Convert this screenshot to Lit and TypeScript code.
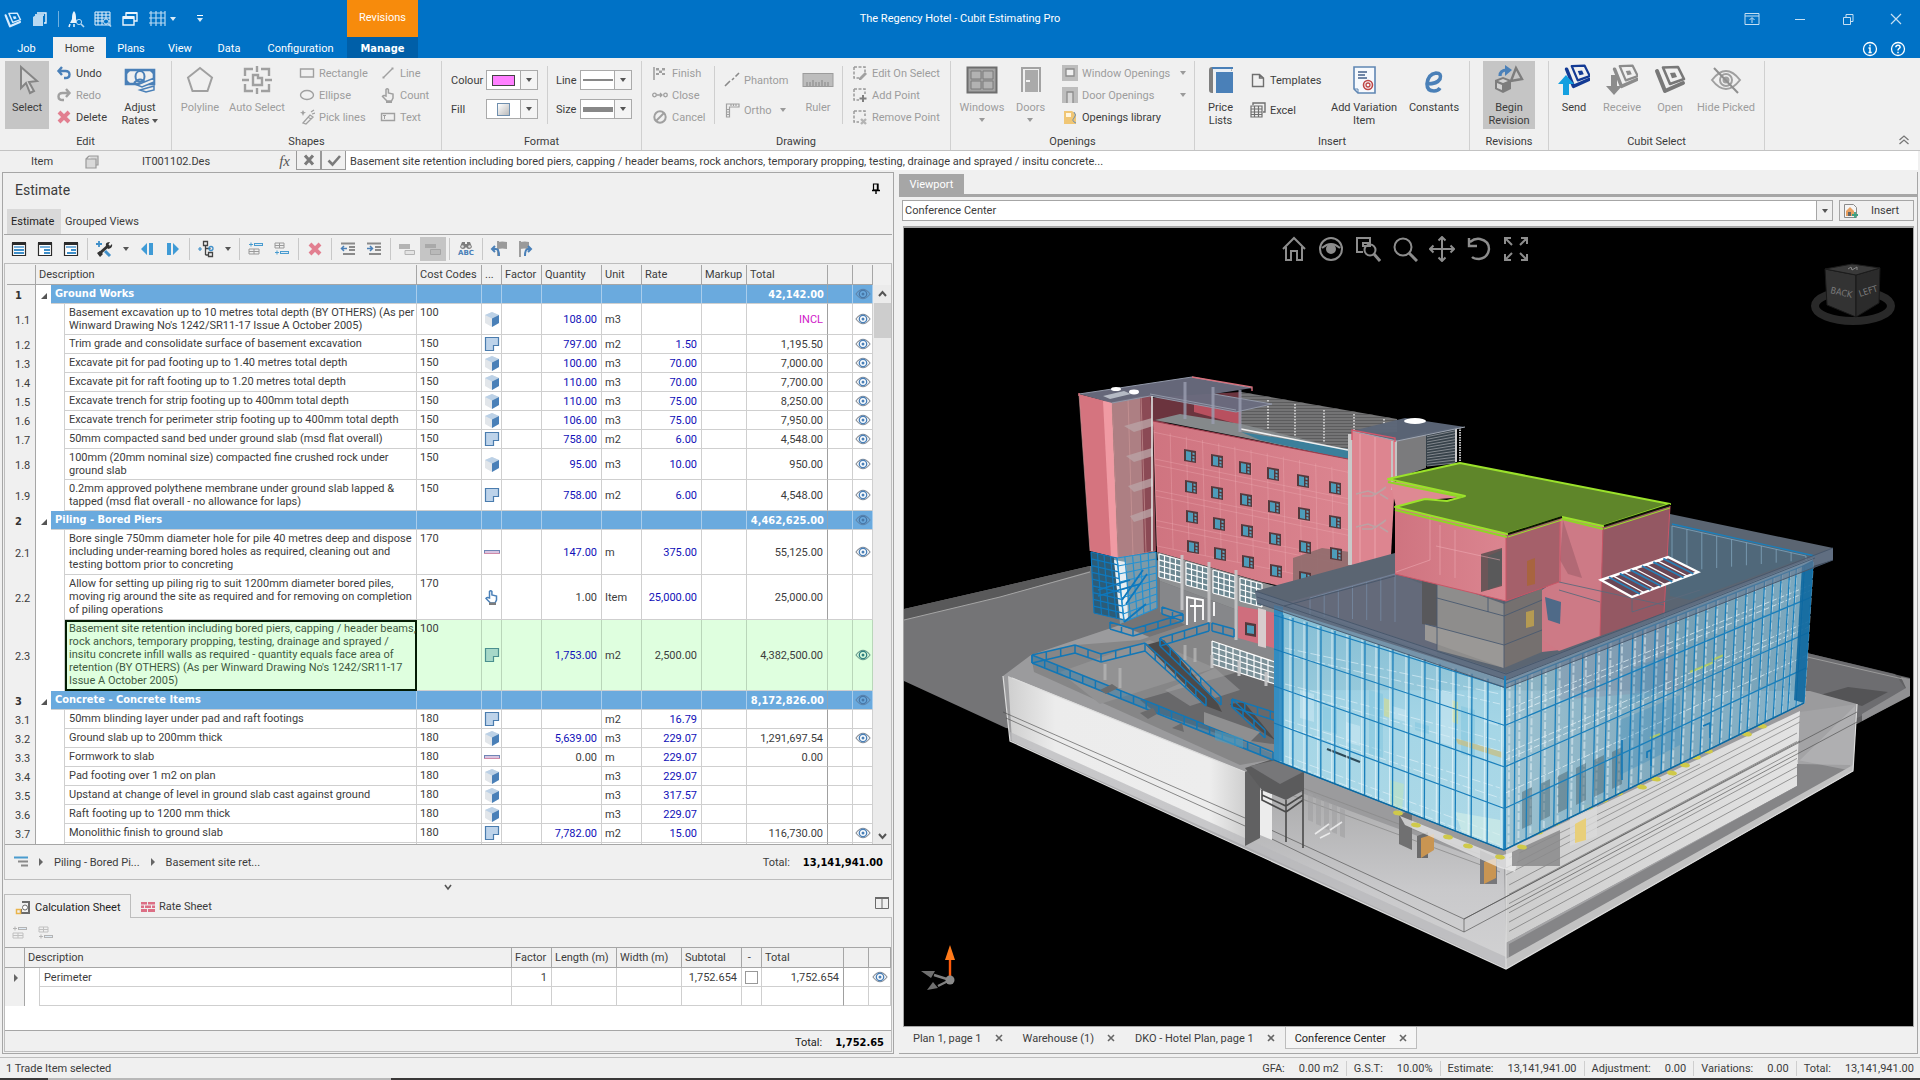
import { LitElement, html, css, svg, nothing } from "lit";
import { customElement } from "lit/decorators.js";
import { classMap } from "lit/directives/class-map.js";

type Pt = [number, number];

/* ------------------------------------------------------------------ icons */

const icon = (size: number, body: unknown, w = size) =>
  html`<svg class="ic" width=${w} height=${size} viewBox="0 0 ${w} ${size}" aria-hidden="true">${body}</svg>`;

const BLUE = "#4a80b8";
const GREY = "#7f7f7f";
const PALE = "#a0a0a0";
const RED = "#e27f90";

const cubit = (c: string) => svg`
  <path d="M9 2.500L24 2L30 14L16 19Z" fill="none" stroke=${c} stroke-width="2.600" stroke-linejoin="round"/>
  <path d="M3 6L11 26L29 18" fill="none" stroke=${c} stroke-width="4" stroke-linejoin="round" stroke-linecap="round"/>
  <path d="M16 8l5-.5 2 4.500-5 1.200z" fill=${c}/>`;

const I = {
  appLogo: icon(18, svg`<g transform="translate(0 2) scale(.55)">${cubit("#d6ecff")}</g>`),
  pages: icon(18, svg`<path d="M6 3h9v10h-2M4 5h9" fill="none" stroke="#eaf4fc" stroke-width="1.400"/><path d="M2 7l3-2h7v11H2z" fill="#b8d9f2"/>`),
  rocket: icon(18, svg`<path d="M7 1c2 2 2 5 2 8l2 4H3l2-4c0-3 0-6 2-8z" fill="#eaf4fc"/><path d="M3 14l-1 3M7 14v3" stroke="#eaf4fc" stroke-width="1.500"/><circle cx="12" cy="12" r="2.600" fill="#0072c6" stroke="#b8d9f2"/><path d="M14 14l3 3" stroke="#b8d9f2" stroke-width="1.600"/>`),
  gridFind: icon(18, svg`<path d="M1 2h15v13H1zM1 5h15M1 8h15M1 11h15M4 2v13M8 2v13M12 2v13" fill="none" stroke="#eaf4fc"/><circle cx="12" cy="11.500" r="2.500" fill="#0072c6" stroke="#b8d9f2"/><path d="M14 13.500l3 3" stroke="#b8d9f2" stroke-width="1.600"/>`),
  cascade: icon(18, svg`<path d="M5 6V3h11v8h-3M2 7h11v8H2z" fill="none" stroke="#eaf4fc" stroke-width="1.400"/><path d="M2 6h11v3H2zM5 2h11v2H5z" fill="#eaf4fc"/>`),
  grid: icon(18, svg`<path d="M1 3h16M1 8h16M1 13h16M3 1v15M8 1v15M13 1v15M17 1v15" stroke="#b8d9f2" stroke-width="1.200"/>`),
  pin: icon(18, svg`<path d="M2 3.500h14v11H2zM2 6h14M9 13V8M6.500 10L9 7.500 11.500 10" fill="none" stroke="#c6dff2"/>`),
  min: icon(18, svg`<path d="M4 9.500h10" stroke="#c6dff2"/>`),
  restore: icon(18, svg`<path d="M4.500 7.500h7v7h-7zM7 7V4.500h7v7h-2" fill="none" stroke="#c6dff2"/>`),
  close: icon(18, svg`<path d="M4 4l10 10M14 4L4 14" stroke="#c6dff2" stroke-width="1.200"/>`),
  info: icon(16, svg`<circle cx="8" cy="8" r="6.500" fill="none" stroke="#fff" stroke-width="1.300"/><path d="M8 3.800v1.700M6.500 7H8v4.500M6.500 11.500h3.200" stroke="#fff" stroke-width="1.500" fill="none"/>`),
  help: icon(16, svg`<circle cx="8" cy="8" r="6.500" fill="none" stroke="#fff" stroke-width="1.300"/><path d="M5.800 6.200Q6 4.200 8 4.200t2.200 1.800Q10.200 7 8.700 7.800 8 8.300 8 9.500M8 10.800v1.500" stroke="#fff" stroke-width="1.500" fill="none"/>`),
  cursor: icon(32, svg`<path d="M10 3l16 14-8 1 5 9-4 2-4-10-5 5z" fill="#d4d4d4" stroke="#858585" stroke-width="2"/>`),
  undo: icon(16, svg`<path d="M6 2L2.500 6 6 10M3 6h6.500q4 0 4 3.500t-4 3.500H8" fill="none" stroke=${BLUE} stroke-width="2.400"/>`),
  redo: icon(16, svg`<path d="M10 2l3.500 4L10 10M13 6H6.500q-4 0-4 3.500t4 3.500H8" fill="none" stroke=${PALE} stroke-width="2.400"/>`),
  del: icon(16, svg`<path d="M3 3l10 10M13 3L3 13" stroke=${RED} stroke-width="4"/>`),
  rates: icon(32, svg`<path d="M2 6h28v14H2z" fill="none" stroke=${BLUE} stroke-width="2.600"/><path d="M2 6h5L2 11zM30 6h-5l5 5zM2 20h5l-5-5z" fill=${BLUE}/><ellipse cx="16" cy="12.500" rx="4.500" ry="5.500" fill="#f0f0f0" stroke=${BLUE} stroke-width="2"/><path d="M10 19q6-7 12 0" fill="none" stroke=${BLUE} stroke-width="2"/><path d="M13 21l17-7v4l-12 5zM16 26l14-4v4l-8 2z" fill="#f0f0f0" stroke=${BLUE} stroke-width="1.500"/>`),
  polyline: icon(32, svg`<path d="M16 4l12 9.500L23.500 27h-15L4 13.500z" fill="none" stroke=${PALE} stroke-width="2"/>`),
  autoSelect: icon(32, svg`<g fill="none" stroke=${PALE} stroke-width="2.400"><path d="M4 12V5h8M20 5h8v7M28 20v7h-8M12 27H4v-7M16 2v6M16 24v6M1 16h7M24 16h7"/><path d="M12 11h5v3h4v7h-9zM12 11"/></g>`),
  rect: icon(16, svg`<path d="M1.500 4h13v8h-13z" fill="none" stroke=${PALE} stroke-width="1.400"/>`),
  ellipse: icon(16, svg`<ellipse cx="8" cy="8" rx="6.500" ry="4.500" fill="none" stroke=${PALE} stroke-width="1.400"/>`),
  pick: icon(16, svg`<path d="M4 14l7-8 3 2-7 7zM9 8l3 2M12 3l3-2M13 5l3-1" fill="none" stroke=${PALE} stroke-width="1.300"/><path d="M4 1l1 2 2 .5-2 1L4 7 3 4.500 1 3.500 3 3z" fill=${PALE}/>`),
  line: icon(16, svg`<path d="M4 12L12 4" stroke=${PALE} stroke-width="1.500"/><path d="M2.500 11.500h2v2h-2zM11.500 2.500h2v2h-2z" fill=${PALE}/>`),
  hand: icon(16, svg`<path d="M6 9V2.500q1.200-1.500 2.400 0V6l4.600 1v4l-1.500 3H7L2.500 9.500q1-1.500 3.500-.5z" fill="none" stroke=${PALE} stroke-width="1.500"/><path d="M6 14h6v2H6z" fill=${PALE}/>`),
  text: icon(16, svg`<path d="M1.500 4.500h13v7h-13z" fill="none" stroke=${PALE} stroke-width="1.400"/><path d="M3 6.500h3M4.500 6.500v3.500" stroke=${PALE}/>`),
  finish: icon(16, svg`<path d="M2 2v13" stroke=${PALE} stroke-width="1.600"/><path d="M4 3h3v2.500H4zM10 3h3v2.500h-3zM7 5.500h3V8H7zM4 8h3v2H4zM10 8h3v2h-3z" fill=${PALE}/>`),
  closeShape: icon(16, svg`<circle cx="2.500" cy="8" r="1.800" fill="none" stroke=${PALE} stroke-width="1.300"/><circle cx="13.500" cy="8" r="1.800" fill="none" stroke=${PALE} stroke-width="1.300"/><path d="M4.500 8H10M8 6l2 2-2 2" fill="none" stroke=${PALE} stroke-width="1.300"/>`),
  cancel: icon(16, svg`<circle cx="8" cy="8" r="5.700" fill="none" stroke=${PALE} stroke-width="2"/><path d="M12 4L4 12" stroke=${PALE} stroke-width="2"/>`),
  phantom: icon(16, svg`<path d="M1 14l5-5M8 8l2-2M11.500 4.500L15 1" stroke="#8a8a8a" stroke-width="1.600"/>`),
  ortho: icon(16, svg`<path d="M2.500 15V2H15v3H5.500v10zM7 2v2M9.500 2v2M12 2v2M3 7.500h2M3 10h2M3 12.500h2" fill="none" stroke=${PALE} stroke-width="1.200"/>`),
  ruler: icon(32, svg`<rect x="1" y="9.500" width="30" height="13" fill="#bdbdbd" stroke="#9c9c9c"/><path d="M5 22v-4M8 22v-4M11 22v-6M14 22v-4M17 22v-4M20 22v-6M23 22v-4M26 22v-4" stroke="#858585"/>`),
  editSel: icon(16, svg`<path d="M2 2h11v5M2 2v11h5" fill="none" stroke="#9a9a9a" stroke-width="1.500" stroke-dasharray="3 1.500"/><path d="M7 13l6-6 2 2-6 6H7z" fill=${PALE}/>`),
  addPt: icon(16, svg`<path d="M2 2h11v5M2 2v11h5" fill="none" stroke="#9a9a9a" stroke-width="1.500" stroke-dasharray="3 1.500"/><path d="M11 8v7M7.500 11.500h7" stroke=${GREY} stroke-width="2"/>`),
  remPt: icon(16, svg`<path d="M2 2h11v5M2 2v11h5" fill="none" stroke="#9a9a9a" stroke-width="1.500" stroke-dasharray="3 1.500"/><path d="M9 10l5 5M14 10l-5 5" stroke="#b4b4b4" stroke-width="2.400"/>`),
  windows: icon(32, svg`<path d="M1.500 3.500h29v25h-29z" fill="#a3a3a3" stroke="#6e6e6e" stroke-width="2"/><path d="M5 7h10v8H5zM17 7h10v8H17zM5 17h10v8H5zM17 17h10v8H17z" fill="#b2b2b2" stroke="#7a7a7a"/>`),
  doors: icon(32, svg`<path d="M7 28V4h18v24" fill="none" stroke="#a3a3a3" stroke-width="2"/><path d="M10 6h13v22H10z" fill="#aaaaaa"/><path d="M11 17h4" stroke="#f4f4f4" stroke-width="2"/>`),
  winOpen: icon(16, svg`<path d="M0 0h16v16H0z" fill="#bdbdbd"/><path d="M4 4h8v7H4z" fill="#f0f0f0" stroke="#8c8c8c" stroke-width="1.300"/>`),
  doorOpen: icon(16, svg`<path d="M0 0h16v16H0z" fill="#bdbdbd"/><path d="M5 16V5h6v11" fill="#d8d8d8" stroke="#8c8c8c" stroke-width="1.300"/>`),
  openLib: icon(16, svg`<path d="M2 2h8l4 3v10H2z" fill="#f0c674"/><path d="M4 4h5v4H4z" fill="#fff6e0"/><path d="M12 3q3 3 0 6t2 5" fill="none" stroke="#6b8fb5"/>`),
  prices: icon(32, svg`<path d="M7 3h20v4H8v22H7q-3 0-3-3V6q0-3 3-3z" fill="#7f7f7f"/><path d="M8 4h19l-1 4H8z" fill="#e8eef5"/><path d="M11 8h17v21H11z" fill=${BLUE}/><path d="M7 3h21v2H7z" fill=${BLUE}/>`),
  page: icon(16, svg`<path d="M2.500 2.500h7l4 3.500v8.500h-11zM9.500 2.500V6h4" fill="none" stroke="#6f6f6f" stroke-width="1.400"/>`),
  excel: icon(16, svg`<path d="M3 3V1h12v9h-2" fill="none" stroke="#6f6f6f" stroke-width="1.400"/><path d="M1 4h11v11H1zM1 7h11M1 10h11M1 12.500h11M4.500 4v11M8.500 4v11" fill="none" stroke="#6f6f6f" stroke-width="1.200"/>`),
  variation: icon(32, svg`<path d="M6 3h21v26H10l-4-4z" fill="#f6f9fd" stroke="#5f86b3" stroke-width="1.600"/><path d="M6 25h4v4" fill="none" stroke="#5f86b3"/><path d="M10 8h9M10 11h7M10 14h9" stroke="#46618a" stroke-width="1.300"/><circle cx="20" cy="21" r="4.500" fill="none" stroke="#c04747" stroke-width="1.600"/><circle cx="20" cy="21" r="2" fill="none" stroke="#c04747" stroke-width="1.300"/>`),
  constants: icon(32, svg`<path d="M9 20q10 0 13-5 2-6-4-6-8 1-9 11 0 7 7 7 4 0 6-3" fill="none" stroke=${BLUE} stroke-width="3.600"/>`),
  revision: icon(32, svg`<path d="M7 12q0-6 7-6" fill="none" stroke=${BLUE} stroke-width="3.200"/><path d="M12 1l7 5-7 6z" fill=${BLUE}/><path d="M23 4l-5 13 11-2z" fill="none" stroke="#7d7d7d" stroke-width="2.400"/><path d="M10 13l8 3v9l-8 4-8-4v-9z" fill="#7d7d7d"/><path d="M10 15l5 2-5 2-5-2zM4 19l5 2v5l-5-2z" fill="#d2d2d2"/>`),
  send: icon(32, svg`<g transform="translate(6 0) scale(.86)">${cubit("#133a94")}</g><path d="M8 11l8 9h-5v11H5V20H0z" fill="#14a0e0"/>`),
  receive: icon(32, svg`<g transform="translate(6 0) scale(.86)">${cubit("#8c8c8c")}</g><path d="M8 31l8-9h-5V11H5v11H0z" fill="#8c8c8c"/>`),
  open: icon(32, svg`<g transform="translate(0 1)">${cubit("#787878")}</g>`),
  hide: icon(32, svg`<g fill="none" stroke=${PALE} stroke-width="2"><path d="M2 16q14-18 28 0-14 18-28 0z"/><circle cx="16" cy="16" r="6"/><circle cx="16" cy="16" r="2.500" fill=${PALE}/><path d="M4 4l24 25" stroke="#8f8f8f"/></g>`),
  collapse: icon(12, svg`<path d="M1.500 6L6 2l4.500 4M1.500 10L6 6l4.500 4" fill="none" stroke="#777" stroke-width="1.300"/>`),
  copyGrey: icon(16, svg`<path d="M5 3h9v9h-2M2 6l3-3M2 6h10v9H2z" fill="#d9d9d9" stroke="#999" stroke-width="1.200"/>`),
  x: icon(16, svg`<path d="M4 3.500l8 9M12 3.500l-8 9" stroke="#7a7a7a" stroke-width="3"/>`),
  check: icon(16, svg`<path d="M2.500 8.500l4 4L14 4" fill="none" stroke="#7a7a7a" stroke-width="2.600"/>`),
  pinBlack: icon(12, svg`<path d="M3.500 2h4.500v6H3.500z" fill="none" stroke="#000" stroke-width="1.200"/><path d="M7.500 2v6M2 8.500h8M6 9v3" stroke="#000" stroke-width="1.400"/>`),
};

const listIcon = (a: number, b: number) => icon(16, svg`
  <path d="M1.500 2v12.500h13V2" fill="#fff" stroke="#2b2b2b" stroke-width="1.200"/><path d="M1 1h14v3H1z" fill="#2b2b2b"/>
  <path d="M3 6h10" stroke="#3f8fc9" stroke-width="1.400"/><path d="M${a} 9h${13 - a}M${b} 12h${13 - b}" stroke="#3f8fc9" stroke-width="1.800"/>`);

const rowAdd = (a: string, b: string, flip = false) => icon(18, flip
  ? svg`<path d="M2 3h9v5H2zM2 5.500h9M6.500 3v5" fill="none" stroke=${b}/><path d="M2 12.500h4M4 10.500v4" stroke=${a}/><path d="M7 11h9v3H7z" fill=${a}/><path d="M8 12.500h7" stroke="#dfeaf4"/>`
  : svg`<path d="M2 4.500h4M4 2.500v4" stroke=${a}/><path d="M7 3h9v3H7z" fill=${a}/><path d="M8 4.500h7" stroke="#dfeaf4"/><path d="M2 9h10v5H2zM2 11.500h10M7 9v5" fill="none" stroke=${b}/>`);

const T = {
  wrench: icon(18, svg`<path d="M4 14L14 5" stroke="#333" stroke-width="3"/><path d="M11 6q-1-4 4-4l-2 3 1.500 1.500L17 4q1 4-4 5zM2 13l3-2 3 3-3 3z" fill="#333"/><path d="M1 4h6M4 1v6" stroke="#3f8fc9" stroke-width="1.800"/><path d="M10 11l5 5" stroke="#3f8fc9" stroke-width="3"/>`),
  prev: icon(16, svg`<path d="M2 8l6-6v12zM10 2h4v12h-4z" fill="#3f9bd6"/>`),
  next: icon(16, svg`<path d="M14 8L8 2v12zM2 2h4v12H2z" fill="#3f9bd6"/>`),
  tree: icon(18, svg`<path d="M6.500 1.500h4v4h-4zM8.500 6v9M8.500 8.500h5M8.500 15h3" fill="none" stroke="#444" stroke-width="1.300"/><path d="M11.500 12.500h4v4h-4z" fill="none" stroke="#444" stroke-width="1.300"/><circle cx="14" cy="8.500" r="2" fill="none" stroke="#3f8fc9" stroke-width="1.300"/><path d="M1 9h4M3 7v4" stroke="#3f8fc9" stroke-width="1.200"/>`),
  outdent: icon(16, svg`<path d="M1 2.500h14M9 6h6M9 9h6M3 13h12" stroke="#8a8a8a" stroke-width="1.800"/><path d="M7 7.500H1.500M4 5L1.500 7.500 4 10" fill="none" stroke=${BLUE} stroke-width="1.500"/>`),
  indent: icon(16, svg`<path d="M1 2.500h14M9 6h6M9 9h6M3 13h12" stroke="#8a8a8a" stroke-width="1.800"/><path d="M1 7.500h5.500M4 5l2.500 2.500L4 10" fill="none" stroke=${BLUE} stroke-width="1.500"/>`),
  merge: icon(16, svg`<path d="M0 3h11v5H0z" fill="#b4b4b4"/><path d="M6 9.500h9.500v4H6z" fill="#e4e4e4" stroke="#b4b4b4"/>`),
  mergeOn: icon(16, svg`<path d="M0 3h11v4H0z" fill="#a9a9a9"/><path d="M5.500 8.500h10v5h-10z" fill="#b9b9b9" stroke="#a5a5a5"/>`),
  abc: html`<span class="abc">${icon(8, svg`<path d="M4 1h3v2h2V1h3l2 5q-1 2-3 2t-3-2q-1 2-3 2T2 6z" fill="#7d7d7d"/><circle cx="4.500" cy="5.500" r="1.300" fill="#ddd"/><circle cx="11.500" cy="5.500" r="1.300" fill="#ddd"/>`, 16)}<b>ABC</b></span>`,
  flagL: icon(18, svg`<path d="M8 1v15" stroke="#8a8a8a" stroke-width="1.600"/><path d="M8 2q4-1 9 0v7q-5-1-9 0z" fill="#9a9a9a"/><path d="M2 9h4q3 0 3 7M5 6L2 9l3 3" fill="none" stroke=${BLUE} stroke-width="2"/>`),
  flagR: icon(18, svg`<path d="M4 1v16" stroke="#8a8a8a" stroke-width="1.600"/><path d="M4 2q5-1 9 0v7q-5-1-9 0z" fill="#9a9a9a"/><path d="M15 9h-3q-3 0-3 7M12 6l3 3-3 3" fill="none" stroke=${BLUE} stroke-width="2"/>`),
};

const KIND: Record<string, unknown> = {
  cube: icon(16, svg`<path d="M8 1l7 3v8l-7 4-7-4V4z" fill="#e2e6ea"/><path d="M8 1l7 3-7 3.500L1 4z" fill="#bcd1e6"/><path d="M8 7.500L15 4v8l-7 4z" fill=${BLUE}/>`),
  area: icon(16, svg`<path d="M1.500 1.500h13v8h-5v5h-8z" fill="#bdd3ea" stroke="#4a7cae" stroke-width="1.200"/>`),
  areaSel: icon(16, svg`<path d="M1.500 1.500h13v8h-5v5h-8z" fill="#a6d8c8" stroke="#4a8f8f" stroke-width="1.200"/>`),
  bar: icon(16, svg`<path d="M0 6.500h16v3H0z" fill="#d7c3e0"/><path d="M0 6.500h16M.5 6v4M15.500 6v4" stroke="#6f86b5"/><path d="M0 9.500h16" stroke="#cf8ba8"/>`),
  hand: icon(16, svg`<path d="M5.500 9V2.500q1.200-1.500 2.400 0V6l4.600 1v4l-1.500 3H6.500L2 9.500q1-1.500 3.500-.5z" fill="#fff" stroke=${BLUE} stroke-width="1.500"/><path d="M5 13.500h7V16H5z" fill="#7d7d7d"/>`),
};

const eye = (o = "#8a9099", i = BLUE) => icon(16, svg`
  <path d="M1 8q7-9.500 14 0-7 9.500-14 0z" fill="none" stroke=${o} stroke-width="1.200"/>
  <circle cx="8" cy="8" r="3.700" fill="none" stroke=${i} stroke-width="1.400"/><circle cx="8" cy="8" r="1.500" fill=${i}/>`);

/* ------------------------------------------------------------------- data */

interface Row { n: string; d: string[]; section?: boolean; code?: string; kind?: string; q?: string; qp?: boolean; u?: string; r?: string; t?: string; eye?: boolean; sel?: boolean; incl?: boolean; }

const ROWS: Row[] = [
  { n: "1", d: ["Ground Works"], section: true, t: "42,142.00" },
  { n: "1.1", d: ["Basement excavation up to 10 metres total depth (BY OTHERS) (As per", "Winward Drawing No's 1242/SR11-17 Issue A October 2005)"], code: "100", kind: "cube", q: "108.00", u: "m3", t: "INCL", incl: true, eye: true },
  { n: "1.2", d: ["Trim grade and consolidate surface of basement excavation"], code: "150", kind: "area", q: "797.00", u: "m2", r: "1.50", t: "1,195.50", eye: true },
  { n: "1.3", d: ["Excavate pit for pad footing up to 1.40 metres total depth"], code: "150", kind: "cube", q: "100.00", u: "m3", r: "70.00", t: "7,000.00", eye: true },
  { n: "1.4", d: ["Excavate pit for raft footing up to 1.20 metres total depth"], code: "150", kind: "cube", q: "110.00", u: "m3", r: "70.00", t: "7,700.00", eye: true },
  { n: "1.5", d: ["Excavate trench for strip footing up to 400mm total depth"], code: "150", kind: "cube", q: "110.00", u: "m3", r: "75.00", t: "8,250.00", eye: true },
  { n: "1.6", d: ["Excavate trench for perimeter strip footing up to 400mm total depth"], code: "150", kind: "cube", q: "106.00", u: "m3", r: "75.00", t: "7,950.00", eye: true },
  { n: "1.7", d: ["50mm compacted sand bed under ground slab (msd flat overall)"], code: "150", kind: "area", q: "758.00", u: "m2", r: "6.00", t: "4,548.00", eye: true },
  { n: "1.8", d: ["100mm (20mm nominal size) compacted fine crushed rock under", "ground slab"], code: "150", kind: "cube", q: "95.00", u: "m3", r: "10.00", t: "950.00", eye: true },
  { n: "1.9", d: ["0.2mm approved polythene membrane under ground slab lapped &", "tapped (msd flat overall - no allowance for laps)"], code: "150", kind: "area", q: "758.00", u: "m2", r: "6.00", t: "4,548.00", eye: true },
  { n: "2", d: ["Piling - Bored Piers"], section: true, t: "4,462,625.00" },
  { n: "2.1", d: ["Bore single 750mm diameter hole for pile 40 metres deep and dispose", "including under-reaming bored holes as required, cleaning out and", "testing bottom prior to concreting"], code: "170", kind: "bar", q: "147.00", u: "m", r: "375.00", t: "55,125.00", eye: true },
  { n: "2.2", d: ["Allow for setting up piling rig to suit 1200mm diameter bored piles,", "moving rig around the site as required and for removing on completion", "of piling operations"], code: "170", kind: "hand", q: "1.00", qp: true, u: "Item", r: "25,000.00", t: "25,000.00" },
  { n: "2.3", d: ["Basement site retention including bored piers, capping / header beams,", "rock anchors, temporary propping, testing, drainage and sprayed /", "insitu concrete infill walls as required - quantity equals face area of", "retention (BY OTHERS) (As per Winward Drawing No's 1242/SR11-17", "Issue A October 2005)"], code: "100", kind: "areaSel", q: "1,753.00", u: "m2", r: "2,500.00", t: "4,382,500.00", eye: true, sel: true },
  { n: "3", d: ["Concrete - Concrete Items"], section: true, t: "8,172,826.00" },
  { n: "3.1", d: ["50mm blinding layer under pad and raft footings"], code: "180", kind: "area", u: "m2", r: "16.79" },
  { n: "3.2", d: ["Ground slab up to 200mm thick"], code: "180", kind: "cube", q: "5,639.00", u: "m3", r: "229.07", t: "1,291,697.54", eye: true },
  { n: "3.3", d: ["Formwork to slab"], code: "180", kind: "bar", q: "0.00", qp: true, u: "m", r: "229.07", t: "0.00" },
  { n: "3.4", d: ["Pad footing over 1 m2 on plan"], code: "180", kind: "cube", u: "m3", r: "229.07" },
  { n: "3.5", d: ["Upstand at change of level in ground slab cast against ground"], code: "180", kind: "cube", u: "m3", r: "317.57" },
  { n: "3.6", d: ["Raft footing up to 1200 mm thick"], code: "180", kind: "cube", u: "m3", r: "229.07" },
  { n: "3.7", d: ["Monolithic finish to ground slab"], code: "180", kind: "area", q: "7,782.00", u: "m2", r: "15.00", t: "116,730.00", eye: true },
  { n: "", d: [""] },
];

/* ------------------------------------------------------------ 3D viewport */

const mix = (a: Pt, b: Pt, t: number): Pt => [a[0] + (b[0] - a[0]) * t, a[1] + (b[1] - a[1]) * t];
const seg = (a: Pt, b: Pt) => `M${a[0].toFixed(1)} ${a[1].toFixed(1)}L${b[0].toFixed(1)} ${b[1].toFixed(1)}`;
/** Lines of a grid over the quad tl-tr-br-bl, at fractions us across and vs down. */
const quadGrid = (tl: Pt, tr: Pt, br: Pt, bl: Pt, us: number[], vs: number[]) =>
  us.map((u) => seg(mix(tl, tr, u), mix(bl, br, u))).join("") + vs.map((v) => seg(mix(tl, bl, v), mix(tr, br, v))).join("");
const steps = (n: number) => Array.from({ length: n + 1 }, (_, i) => i / n);
/** A handrail: top and bottom rail plus posts. */
const rail = (pts: Pt[], h: number, gap = 14) => {
  let d = "";
  for (let i = 0; i < pts.length - 1; i++) {
    const [a, b] = [pts[i], pts[i + 1]];
    const n = Math.max(1, Math.round(Math.hypot(b[0] - a[0], b[1] - a[1]) / gap));
    d += quadGrid(a, b, [b[0], b[1] + h], [a[0], a[1] + h], steps(n), [0, 1]);
  }
  return d;
};
const poly = (points: string, fill: string, opacity = 1, stroke = "none") =>
  svg`<polygon points=${points} fill=${fill} fill-opacity=${opacity} stroke=${stroke}/>`;
const ln = (d: string, stroke: string, w = 1, o = 1, dash = "none") =>
  svg`<path d=${d} fill="none" stroke=${stroke} stroke-width=${w} stroke-opacity=${o} stroke-dasharray=${dash}/>`;

const WINDOWS: Pt[] = [
  [1190, 456], [1217, 461], [1245, 468], [1273, 474], [1303, 481], [1335, 488],
  [1191, 487], [1217, 493], [1246, 500], [1274, 507], [1304, 514], [1335, 522],
  [1192, 517], [1219, 524], [1247, 531], [1275, 539], [1305, 547], [1336, 554],
  [1193, 547], [1220, 554], [1248, 562], [1276, 571], [1305, 578], [1251, 630],
];
const LEFT_X = [1283, 1293, 1307, 1321, 1335, 1350, 1365, 1379, 1393, 1409, 1425, 1440, 1456, 1472, 1488, 1505];
const RIGHT_X = [0, 31, 68, 110, 153, 195, 233, 273, 308, 343, 383, 413, 451, 483, 513, 543, 573, 603, 633, 663, 693, 723, 748, 778, 803, 828, 853, 873, 898, 923];
const LAMPS: Pt[] = [[1522, 847], [1538, 832], [1555, 823], [1588, 807], [1603, 800], [1618, 793], [1642, 787], [1656, 779], [1672, 773], [1685, 765], [1696, 757], [1708, 751], [1747, 734], [1762, 726], [1448, 837], [1468, 846], [1500, 857], [1416, 825], [1398, 813]];

@customElement("model-view")
class ModelView extends LitElement {
  static styles = css`
    :host { display: block; background: #000; min-height: 0; overflow: hidden; }
    .scene { display: block; width: 100%; height: 100%; }
    .face { font: 9px "DejaVu Sans Condensed", sans-serif; fill: #7a7a7a; }
  `;

  private site() {
    return svg`
      ${poly("904,609 1000,587 1090,566 1160,560 1280,600 1280,770 1006,728 904,681", "#747476")}
      ${poly("904,609 1000,587 1090,566 1090,571 1000,597 904,620", "#59595a")}
      ${ln("M904 620L1000 597L1090 572", "#a5a5a5")}
      ${poly("1803,652 1910,678 1910,695 1857,724 1790,720", "#606062")}
      ${poly("1803,652 1895,674 1910,695 1857,718 1800,690", "#747476", 0.7)}
      ${poly("1848,687 1888,692 1862,706 1820,695", "#545456")}
      ${poly("1901,677 1910,679 1910,696 1862,721 1862,714 1906,688", "#909092")}
      ${ln("M1803 656L1903 679", "#9a9a9a")}
      ${poly("1003,676 1031,655 1120,625 1280,690 1810,691 1857,704 1853,771 1506,969 1010,740", "#9b9b9d")}
      ${poly("1031,655 1076,645 1140,640 1200,620 1280,660 1280,758 1240,765 1034,672", "#868687")}
      ${poly("1140,700 1280,660 1280,745 1230,738 1155,712", "#68686a")}
      ${poly("1060,672 1150,640 1215,668 1100,704", "#929293")}
      ${poly("1165,690 1215,668 1240,690 1190,706", "#a2a2a3", 0.5)}
      ${poly("1008,676 1245,772 1245,846 1012,741", "url(#wall)")}
      ${poly("1245,772 1504,868 1506,943 1506,968 1245,846", "url(#front)")}
      ${poly("1010,732 1245,838 1506,957 1506,969 1010,741", "#b8b8ba", 0.7)}
      ${poly("1506,868 1506,850 1800,711 1797,786 1506,943", "url(#right)")}
      ${poly("1506,943 1797,786 1800,712 1857,704 1853,771 1506,969", "#a3a3a5")}
      ${poly("1509,944 1797,786 1797,764 1850,765 1853,771 1509,965", "#858587")}
      ${poly("1506,959 1853,765 1853,771 1506,969", "#c2c2c2")}
      ${poly("1797,763 1855,706 1853,771 1797,760", "#bcbcbd", 0.5)}
      ${ln("M1003 676L1010 741L1506 969L1853 771L1857 704M1506 868V969M1012 678L1245 772", "#dcdcdc", 1.2)}
      ${ln("M1003 712L1245 818L1464 919L1800 741M1464 919V932L1857 722M1006 718L1245 826L1464 932M1857 712L1464 919", "#4d4d4d", 0.8, 0.8)}
      ${ln(quadGrid([1509, 885], [1797, 733], [1797, 786], [1509, 943], [], [0, 0.16, 0.32, 0.48, 0.64, 0.8]), "#777", 0.8, 0.9)}
      ${ln("M1506 868L1800 716M1506 875L1800 722M1509 858L1700 764M1245 778L1500 872M1260 772L1500 862", "#8a8a8a", 0.8)}
      ${poly("1245,772 1260,766 1260,838 1245,846", "#616162")}
      ${poly("1260,790 1272,794 1272,840 1260,835", "#ececec")}
      ${poly("1245,768 1276,758 1304,771 1304,790 1286,800 1262,790", "#5b5b5c")}
      ${poly("1250,766 1276,760 1303,772 1280,784", "#777779")}
      ${ln("M1262 790V800L1286 812L1303 800V790M1286 800V842M1303 800V848M1262 795L1286 806L1303 795", "#4a4a4a", 1.6)}
      ${[0, 1, 2, 3, 4].map((i) => poly(`${1308 + i * 8},${792 + i * 4} ${1313 + i * 8},${794 + i * 4} ${1313 + i * 8},${822 + i * 4} ${1308 + i * 8},${820 + i * 4}`, "#a0a0a1", 0.6))}
      ${poly("1399,816 1412,808 1412,850 1399,844", "#707071")}
      ${poly("1417,836 1428,832 1428,858 1417,858", "#6b6b6c")}
      ${poly("1421,838 1434,834 1434,850 1421,858", "#c99552")}
      ${poly("1480,850 1497,858 1497,884 1480,884", "#77777a")}
      ${poly("1484,862 1496,858 1496,878 1484,884", "#c99552")}
      ${poly("1400,816 1500,856 1520,850 1515,872 1500,868 1405,825", "#efefef", 0.7)}
      ${poly("1512,852 1560,830 1560,866 1512,866", "#8a8a8b", 0.85)}
      ${poly("1570,818 1597,806 1597,836 1570,846", "#dadada", 0.8)}
      ${poly("1575,824 1586,818 1586,840 1575,843", "#e8cf7a")}
      ${LAMPS.map(([x, y]) => svg`<ellipse cx=${x} cy=${y} rx="5" ry="2.400" fill="#cfc94a" transform="rotate(10 ${x} ${y})"/>`)}
      ${ln("M1315 834l14-10M1330 830l12-8M1320 838l10-5", "#fff", 1.6, 0.7)}`;
  }

  private hotel() {
    return svg`
      ${poly("1079,394 1110,402 1118,558 1090,551", "#d5747f")}
      ${poly("1103,401 1112,402 1118,558 1111,557", "#f09aa3")}
      ${poly("1112,402 1141,396 1150,397 1155,551 1118,558", "#ad7f83")}
      ${poly("1140,396 1152,396 1156,551 1144,553", "#8b4a55")}
      ${ln("M1112 402L1118 558L1155 551M1079 394L1090 551M1128 399L1133 555M1141 396L1146 552", "#c99", 0.8, 0.8)}
      ${[0, 1, 2, 3].map((i) => poly(`${1124 + i * 2},${426 + i * 30} ${1152},${418 + i * 30} ${1153},${426 + i * 30} ${1134},${432 + i * 30}`, "#b9a3a5", 0.8))}
      ${poly("1150,398 1190,395 1241,392 1241,428 1190,420 1153,424", "#6b343e")}
      ${poly("1194,402 1236,412 1241,412 1241,425 1194,412", "#b8505f")}
      ${poly("1241,392 1397,419 1397,432 1350,434 1348,450 1241,428", "#747475")}
      ${poly("1241,392 1397,419 1397,432 1350,434 1348,450 1241,428", "url(#mesh)")}
      ${ln("M1268 400V430M1295 404V438M1324 410V442M1354 414V430M1384 419V424", "#e8e8e8", 1.6, 0.9, "1.500 1.500")}
      ${poly("1155,420 1180,414 1241,424 1348,450 1348,459 1241,437", "#85898b")}
      ${poly("1241,432 1348,449 1348,459 1260,440", "#3b7f9b")}
      ${ln("M1241 429L1348 450", "#f0f0f0", 1.6)}
      ${poly("1079,394 1192,377 1252,388 1214,394 1272,404 1236,412 1150,396 1112,403", "#6a6d80", 0.95)}
      ${ln("M1079 394L1192 377L1252 388M1214 394L1272 404L1236 412L1150 396L1112 403M1150 394L1236 410", "#9298a8")}
      ${ln("M1192 377L1252 387V391M1079 396V393", "#d8707c", 1.4)}
      <ellipse cx="1116" cy="389" rx="5" ry="2" fill="#fff"/><ellipse cx="1134" cy="392" rx="5" ry="2.400" fill="#fff"/>
      ${poly("1103,396 1124,391 1131,394 1110,399", "#b5bac4")}
      ${ln("M1185 382V419M1213 387V424M1240 390V432", "#9a9eb0", 3, 0.8)}
      ${poly("1153,421 1348,459 1352,565 1300,590 1262,582 1157,552", "url(#pink)")}
      ${ln(quadGrid([1154, 430], [1348, 470], [1350, 585], [1157, 546], steps(12), [0.02, 0.25, 0.3, 0.52, 0.57, 0.78, 0.83, 1]), "#f3b3bb", 0.8, 0.4)}
      ${ln("M1153 421L1348 459", "#9d3f50", 1.2)}
      ${ln("M1152 396V551", "#d9d9d9", 2, 0.85)}
      ${poly("1293,558 1322,548 1350,552 1350,568 1293,584", "#8f6b6d", 0.9)}
      ${poly("1352,431 1397,440 1391,556 1352,566", "#dd8590")}
      ${ln("M1352 431L1397 440M1360 434V562M1375 437V560", "#f0aab2", 0.8)}
      ${[490, 523].map((y) => ln(`M1356 ${y + 4}l12-3l8 3l10-7M1362 ${y + 6}l10 0l12-7M1380 ${y + 4}l8 5`, "#b9a4a5", 1.6, 0.9))}
      ${ln("M1350 434V565", "#c9c9c9", 4)}${ln("M1392 441V490M1396 441V480", "#c4c4c4", 2)}
      ${poly("1397,440 1426,432 1426,468 1397,478", "#7b7b7d")}
      ${poly("1426,433 1456,427 1456,463 1426,466", "#37424a")}
      ${ln(quadGrid([1427, 434], [1455, 428], [1455, 463], [1427, 466], [], steps(12)), "#8a8f94", 0.9)}
      ${ln("M1456 427V462", "#ccc", 2)}${ln("M1460 427V462", "#eee", 1.6, 1, "1.500 1")}
      ${poly("1352,431 1405,418 1465,427 1397,441", "#5c6678", 0.97)}
      ${ln("M1352 431L1397 441L1465 427", "#9fa6b2")}${ln("M1352 440V430L1395 438V442", "#d5566a", 1.4)}
      <ellipse cx="1415" cy="421" rx="11" ry="3" fill="#fff"/>
      ${WINDOWS.map(([x, y]) => svg`
        <path d="M${x - 6} ${y - 7}l12 2v12l-12-2z" fill="#54393c"/>
        <path d="M${x - 4} ${y - 5}l5 1v9l-5-1z" fill="#4d9cba"/>
        <path d="M${x + 2.5} ${y - 3.5}l2 .4v2l-2-.4zM${x + 2.5} ${y}l2 .4v2l-2-.4zM${x + 2.5} ${y + 3}l2 .4v2l-2-.4z" fill="#5fa7c2"/>`)}
      ${poly("1157,552 1275,586 1275,624 1160,581", "#8e9092")}
      ${poly("1160,581 1275,624 1275,660 1215,640 1160,612", "#86878a")}
      ${[0, 1, 2, 3].map((i) => {
        const x = 1159 + i * 27, y = 554 + i * 8;
        return svg`${poly(`${x},${y} ${x + 22},${y + 6} ${x + 22},${y + 29} ${x},${y + 23}`, "#6c8791")}
          ${ln(quadGrid([x, y], [x + 22, y + 6], [x + 22, y + 29], [x, y + 23], steps(4), steps(4)), "#fff", 1.2)}`;
      })}
      ${ln("M1187 625V597L1203 600V620M1195 598V622M1214 602V616M1190 606H1202", "#fff", 1.8)}
      ${poly("1212,641 1275,662 1275,684 1212,664", "#7c9199")}
      ${ln(quadGrid([1212, 641], [1275, 662], [1275, 684], [1212, 664], steps(9), steps(4)), "#fff", 1.2)}
      ${ln("M1182 555V610M1209 562V622M1236 570V640M1212 655V668M1239 660V676M1266 672V686", "#c8c8c9", 3, 0.9)}
      ${poly("1238,606 1281,614 1281,650 1238,638", "#cf6e7d")}${poly("1258,608 1266,610 1266,648 1258,646", "#d8cccd")}
      <path d="M1245 622l11 2v13l-11-2z" fill="#54393c"/><path d="M1247 625l7 1v8l-7-1z" fill="#4d9cba"/>
      ${poly("1091,552 1117,558 1124,620 1094,613", "#2c5c78")}
      ${poly("1114,558 1156,552 1157,608 1120,624", "#7d9aa8")}
      ${poly("1114,560 1126,562 1128,620 1120,618", "#e6eef2")}
      ${ln(quadGrid([1091, 552], [1117, 558], [1124, 620], [1094, 613], steps(4), steps(9)), "#0e78bd", 1.2)}
      ${ln(quadGrid([1117, 558], [1156, 552], [1157, 608], [1124, 622], steps(5), steps(8)), "#2391d2", 1.2)}
      ${ln("M1122 600L1143 570M1126 604L1147 574M1124 622L1146 604M1098 596L1140 584M1098 590L1130 580", "#0e78bd", 1.8)}`;
  }

  private terrace() {
    const b = "#1277b6";
    return svg`
      ${poly("1146,645 1164,640 1218,704 1222,712 1206,706", "#4c4a4a")}
      ${poly("1230,704 1244,702 1275,740 1262,732", "#4c4a4a")}
      ${poly("1032,655 1273,754 1273,761 1032,663", "#1277b6", 0.35)}
      ${ln(rail([[1032, 655], [1273, 752]], 8), b, 1.5)}
      ${ln(rail([[1032, 655], [1075, 645], [1101, 654], [1145, 643], [1206, 698]], 8), b, 1.5)}
      ${ln(rail([[1110, 622], [1133, 629], [1183, 614], [1162, 607]], 7), b, 1.5)}
      ${ln(rail([[1160, 638], [1209, 623]], 8), b, 1.5)}
      ${ln(rail([[1160, 638], [1221, 697]], 8), b, 1.5)}
      ${ln(rail([[1212, 623], [1234, 629]], 8), b, 1.5)}
      ${ln(rail([[1232, 699], [1283, 715]], 8), b, 1.5)}
      ${ln(rail([[1232, 699], [1265, 730]], 8), b, 1.5)}
      ${poly("1204,712 1260,732 1250,742 1204,724", "#8f8f90")}
      ${poly("1215,730 1243,738 1243,748 1215,740", "#4f9cc0", 0.6)}
      ${poly("1100,690 1112,684 1118,688 1106,694", "#6b6b6c")}${poly("1140,713 1153,708 1157,714 1148,719", "#6b6b6c")}${poly("1172,728 1182,723 1184,732", "#6b6b6c")}
      ${ln("M1105 664V680M1120 668V688M1185 645V660M1195 648V662", "#b4b4b4", 3, 0.8)}`;
  }

  private conference() {
    const blue = "#1a7fbb";
    const L: [Pt, Pt, Pt, Pt] = [[1274, 612], [1505, 684], [1504, 850], [1274, 760]];
    const R: [Pt, Pt, Pt, Pt] = [[1505, 684], [1813, 562], [1804, 703], [1504, 850]];
    return svg`
      ${poly("1255,591 1395,553 1480,500 1670,514 1833,548 1833,560 1813,566 1506,686 1257,603", "#5b6572")}
      ${poly("1285,603 1395,573 1437,590 1437,655", "#646a7a")}
      ${ln(quadGrid([1310, 598], [1395, 574], [1395, 622], [1310, 616], steps(6), [0]), "#7b93ad", 0.8, 0.8)}
      ${poly("1670,524 1810,556 1690,600 1670,596", "#50687a")}
      ${ln(quadGrid([1672, 526], [1806, 556], [1806, 560], [1672, 572], steps(9), [0]), "#8cb3cc", 0.8, 0.8)}
      ${ln("M1672 524L1815 556", blue, 1.3)}
      ${poly("1422,580 1437,578 1437,626 1422,624", "#58585b")}
      ${poly("1437,580 1504,604 1504,668 1437,650", "#8e8d8c")}
      ${poly("1425,624 1504,645 1504,668 1425,640", "#9a9896")}
      ${poly("1504,604 1542,588 1542,652 1504,668", "#75706f")}
      ${ln("M1437 598L1504 616L1542 600M1425 624L1504 645L1542 630M1437 580V650M1504 600V668M1488 598V612", "#4a5a70", 0.9)}
      ${poly("1542,590 1560,578 1560,650 1542,652", "#cf7885")}
      ${poly("1559,516 1603,524 1600,636 1559,651 1542,640 1546,592 1559,578", "#cd7a86")}
      ${poly("1545,597 1561,602 1560,624 1548,620", "#4f6a88")}
      ${poly("1395,505 1506,533 1506,601 1395,574", "url(#pink)")}
      ${poly("1390,482 1466,480 1466,497 1425,500 1396,507", "#de8993")}
      ${poly("1506,533 1560,516 1559,582 1506,601", "#a5606a")}
      ${poly("1603,525 1670,506 1664,613 1600,636", "#945863")}
      ${poly("1563,520 1582,578 1568,574 1560,560", "#a7636d", 0.7)}
      ${poly("1481,554 1502,548 1502,586 1481,592", "#6c5658")}${poly("1488,556 1502,550 1502,584 1488,590", "#59595a")}
      ${poly("1527,561 1535,558 1535,584 1527,586", "#a8643f")}${poly("1526,612 1534,610 1534,626 1526,628", "#b59a52")}
      ${ln("M1440 525V575M1455 530V578M1436 546L1500 560M1430 515V560L1396 572", "#f2b0b8", 1, 0.5)}
      ${ln("M1395 574L1506 601L1559 582M1506 533V601M1560 516V582M1603 525L1600 636M1670 506L1664 613", "#c95566", 1)}
      ${ln("M1559 582L1664 605M1559 590L1600 602M1632 597V612L1700 590", "#5c6a7c", 0.9)}
      <polygon points="1388,479 1460,463 1670,504 1603,526 1562,517 1507,534 1395,507 1425,499 1447,501 1465,496" fill="#5f862a" stroke="#9be22b" stroke-width="2" stroke-linejoin="round"/>
      ${ln("M1388 482L1462 497M1395 510L1507 537M1562 519L1603 529", "#8ed626", 2)}
      ${ln("M1508 534L1562 517M1604 526L1670 505", "#0c1404", 2)}${ln("M1508 537L1562 520M1604 529L1670 508", "#9be22b", 1)}
      <polygon points="1601,580 1668,557 1698,572 1632,597" fill="#6b4654" stroke="#fff" stroke-width="2.400"/>
      ${ln(quadGrid([1601, 580], [1668, 557], [1698, 572], [1632, 597], [0.18, 0.34, 0.5, 0.67, 0.84], []), "#fff", 1.4)}
      ${ln(quadGrid([1601, 580], [1668, 557], [1698, 572], [1632, 597], [0.12, 0.28, 0.44, 0.61, 0.78, 0.93], []), "#2a7fb4", 1.8)}

      ${poly("1274,607 1505,680 1504,850 1274,760", "url(#glassL)", 0.95)}
      ${poly("1505,680 1813,558 1804,703 1504,850", "url(#glassR)", 0.93)}
      ${poly("1559,662 1664,620 1664,612 1680,690 1559,700", "#8a8fa8", 0.35)}
      ${[660, 700, 740, 780].map((y, i) => ln(`M1285 ${y - 12 - i * 4}L1500 ${y + 34 + i * 7}M1290 ${y - 4 - i * 4}L1500 ${y + 44 + i * 7}`, "#e4f4fa", 1, 0.6, "10 3"))}
      ${[0, 1, 2, 3, 4, 5, 6, 7, 8].map((i) => poly(`${1300 + i * 23},${690 + (i % 3) * 16} ${1314 + i * 23},${694 + (i % 3) * 16} ${1314 + i * 23},${722 + (i % 4) * 12} ${1300 + i * 23},${718 + (i % 4) * 12}`, i % 2 ? "#7cc3de" : "#d6eef6", 0.45))}
      ${poly("1384,698 1390,700 1390,718 1384,716", "#c9d9a0", 0.8)}${poly("1452,700 1458,702 1458,724 1452,722", "#c9d9a0", 0.8)}
      ${poly("1455,738 1502,752 1502,758 1458,744", "#c6c08a", 0.8)}${ln("M1327 749L1360 762", "#2e4a58", 2)}
      ${poly("1455,812 1500,820 1500,846 1462,832", "#d5f0e8", 0.6)}${poly("1390,780 1404,784 1402,812 1390,806", "#c2e6b8", 0.5)}
      ${ln(quadGrid(...L, LEFT_X.map((x) => (x - 1277) / 231), []), "#e8f7fc", 1.2, 0.7)}
      ${ln(quadGrid(...R, RIGHT_X.map((x) => (x + 14) / 937), []), "#e2eef4", 2, 0.55, "7 2")}
      ${ln(quadGrid(...R, [], [0.16, 0.2, 0.42, 0.46, 0.66]), "#eaf5fa", 1, 0.7, "6 2")}
      ${[0, 1, 2, 3, 4, 5].map((i) => poly(`${1522 + i * 18},${792 - i * 8} ${1532 + i * 18},${787 - i * 8} ${1532 + i * 18},${824 - i * 8} ${1522 + i * 18},${829 - i * 8}`, "#4a6572", 0.5))}
      ${poly("1620,720 1680,695 1680,745 1620,775", "#2d86ba", 0.3)}${poly("1630,670 1665,655 1665,690 1630,705", "#2d86ba", 0.25)}
      ${ln("M1700 668l14-6M1712 660l12-5M1650 738l10-4M1690 672l10-4", "#b9cf55", 2, 0.8)}
      ${ln("M1647 758V752L1651 750V766M1703 726L1710 723V738M1622 740V780", "#1277b6", 1.6)}
      ${ln(quadGrid(...L, LEFT_X.map((x) => (x - 1274) / 231), [0.02, 0.25, 0.5, 0.75, 1]), blue, 1.3)}
      ${ln(quadGrid(...R, RIGHT_X.map((x) => x / 923), [0, 0.25, 0.5, 0.75, 1]), blue, 1.3)}
      ${poly("1802,566 1813,560 1804,703 1794,700", "#0d679e", 0.9)}
      ${poly("1274,605 1283,607 1283,762 1274,760", "#1277b6", 0.75)}
      ${poly("1255,591 1506,673 1813,556 1833,548 1833,560 1813,568 1506,688 1257,603", "#64748a", 0.62)}
      ${ln("M1255 591L1506 674L1833 548M1257 603L1506 688L1833 560M1257 597L1506 680L1815 558M1284 606L1395 576", "#46566a", 0.9)}
      ${ln("M1505 676V850", blue, 2)}
      ${ln("M1274 760L1504 850L1804 703", "#0d679e", 1.3)}`;
  }

  render() {
    return html`<svg class="scene" viewBox="904 228 1009 798" preserveAspectRatio="xMidYMid meet" role="img" aria-label="3D model">
      <defs>
        <linearGradient id="wall" x1="0" x2="1"><stop offset="0" stop-color="#cfcfcf"/><stop offset=".2" stop-color="#ececec"/><stop offset=".85" stop-color="#ededed"/><stop offset="1" stop-color="#cfcfcf"/></linearGradient>
        <linearGradient id="front" x1="0" y1="0" x2="0" y2="1"><stop offset="0" stop-color="#a6a6a7"/><stop offset=".6" stop-color="#c9c9cb"/><stop offset="1" stop-color="#d2d2d3"/></linearGradient>
        <linearGradient id="right" x1="0" x2="1"><stop offset="0" stop-color="#cdcdcd"/><stop offset="1" stop-color="#e3e3e3"/></linearGradient>
        <linearGradient id="pink" x1="0" x2="1"><stop offset="0" stop-color="#cf7480"/><stop offset="1" stop-color="#db8590"/></linearGradient>
        <linearGradient id="glassL" x1="0" y1="0" x2="0" y2="1"><stop offset="0" stop-color="#8cc8e0"/><stop offset=".5" stop-color="#a6d9ea"/><stop offset="1" stop-color="#aedceb"/></linearGradient>
        <linearGradient id="glassR" x1="0" x2="1"><stop offset="0" stop-color="#9dc6d6"/><stop offset=".5" stop-color="#7fabc0"/><stop offset="1" stop-color="#86b6ce"/></linearGradient>
        <pattern id="mesh" width="3" height="3" patternUnits="userSpaceOnUse"><path d="M0 .5h3" stroke="#5c5c5d"/></pattern>
      </defs>
      ${this.site()}${this.hotel()}${this.terrace()}${this.conference()}
      <ellipse cx="1853" cy="306" rx="38" ry="15" fill="none" stroke="#292929" stroke-width="8"/>
      <path d="M1825 269L1856 275L1856 317L1827 305z" fill="#333" stroke="#181818"/><path d="M1880 268L1856 275L1856 317L1879 303z" fill="#2b2b2b" stroke="#181818"/>
      <path d="M1825 269L1852 264L1880 268L1856 275z" fill="#3a3a3a" stroke="#1c1c1c"/><path d="M1848 269l3-2 1 3 5-3v3" fill="none" stroke="#888"/>
      <text class="face" x="1830" y="293" transform="rotate(13 1830 293)">BACK</text>
      <text class="face" x="1860" y="297" transform="rotate(-18 1860 297)">LEFT</text>
      <path d="M950 979V958" stroke="#ff5a0a" stroke-width="2.400"/><path d="M950 945l5 15h-10z" fill="#ff7a1a"/>
      <path d="M950 980l-16-5M950 980l-12 6" stroke="#808080" stroke-width="2.400"/><path d="M921 971l14 0-4 7zM927 990l6-8 5 6z" fill="#6f6f6f"/><circle cx="950" cy="980" r="4.500" fill="#8a8a8a"/>
    </svg>`;
  }
}

/* -------------------------------------------------------------------- app */

const v = (d: unknown) => icon(26, svg`<g fill="none" stroke="#8d8d8d" stroke-width="2">${d}</g>`);
const VIEW_TOOLS: [string, unknown][] = [
  ["Home", v(svg`<path d="M2 13L13 2l11 11M5 11v13h5v-9h6v9h5V11"/>`)],
  ["Look", v(svg`<circle cx="13" cy="13" r="11"/><path d="M4 12q9-8 18 0"/><circle cx="13" cy="13" r="4" fill="#8d8d8d"/>`)],
  ["Zoom window", v(svg`<path d="M8 16H2V2h13v5M8 7h7v3H8z"/><circle cx="15" cy="14" r="5.500"/><path d="M19 18l6 7" stroke-width="3"/>`)],
  ["Zoom", v(svg`<circle cx="11" cy="11" r="8.500"/><path d="M17 17l8 8" stroke-width="3"/>`)],
  ["Pan", v(svg`<path d="M13 1v24M1 13h24M9.500 4.500L13 1l3.500 3.500M9.500 21.500L13 25l3.500-3.500M4.500 9.500L1 13l3.500 3.500M21.500 9.500L25 13l-3.500 3.500"/>`)],
  ["Rotate", v(svg`<path d="M4 6q5-4 10-3 9 2 9 10-1 9-10 10-5 0-7-2M3 2v8h8" stroke-width="2.400"/>`)],
  ["Fit", v(svg`<path d="M2 8V2h6M2 2l7 7M18 2h6v6M24 2l-7 7M2 18v6h6M2 24l7-7M24 18v6h-6M24 24l-7-7"/>`)],
];

@customElement("app-root")
class AppRoot extends LitElement {
  static styles = css`
    :host { display: flex; flex-direction: column; height: 100vh; background: #f0f0f0; color: #3c3c3c; overflow: hidden;
      font: 11px/13px Roboto, Tahoma, "Noto Sans", sans-serif; }
    * { box-sizing: border-box; }
    b, tr.section td { font-family: "DejaVu Sans Condensed", Tahoma, sans-serif; font-weight: bold; }
    button { font: inherit; color: inherit; background: none; border: 0; padding: 0; margin: 0; white-space: nowrap; }
    input, select { font: inherit; color: inherit; }
    .ic { display: block; flex: none; }
    .grow { flex: 1; }
    .tri { width: 0; height: 0; border: 3px solid transparent; border-top: 4px solid #555; border-bottom: 0; flex: none; }
    .dim { color: #9d9d9d; }
    .dim .tri { border-top-color: #9a9a9a; }

    .titlebar { display: grid; grid-template-columns: 1fr auto 1fr; height: 37px; background: #0072c6; color: #fff; flex: none; }
    .lead { display: flex; }
    .quick { display: flex; align-items: center; width: 347px; padding-left: 4px; }
    .quick button { width: 27px; display: flex; align-items: center; }
    .quick .bar { width: 1px; height: 16px; background: #6fb0e0; margin: 0 8px 0 0; }
    .quick button.slim { width: 22px; }
    .tri.light { border-top-color: #d9ebf8; }
    .more { display: block; border-top: 1px solid #fff; padding-top: 2px; }
    .more .tri { display: block; }
    .orange { width: 71px; background: #f78b0c; display: grid; place-items: center; padding-bottom: 3px; }
    .apptitle { align-self: center; }
    .wins { display: flex; justify-content: flex-end; align-items: center; }
    .wins button { width: 48px; display: grid; place-items: center; }
    .tabs { display: grid; grid-template-columns: 53px 53px 50px 48px 50px 93px 71px 1fr; height: 21px; background: #0072c6; color: #fff; flex: none; }
    .tabs > button { padding-top: 2px; }
    .tabs button.on { background: #f0f0f0; color: #3c3c3c; }
    .tabs button.manage { background: #005fa8; font-family: "DejaVu Sans Condensed", Tahoma, sans-serif; font-weight: bold; }
    .helps { display: flex; justify-content: flex-end; gap: 12px; padding: 2px 14px 0 0; }

    .ribbon { display: flex; height: 93px; border-bottom: 1px solid #c3c3c3; padding-top: 3px; flex: none; }
    .group { display: flex; flex-direction: column; flex: none; }
    .group + .group { border-left: 1px solid #d0d0d0; }
    .gbody { display: grid; height: 68px; }
    .glabel { text-align: center; padding-top: 6px; }
    .edit { width: 171px; } .edit .gbody { padding-left: 5px; grid-template-columns: 44px 67px 48px; }
    .shapes { width: 270px; } .shapes .gbody { padding-left: 6px; grid-template-columns: 44px 70px 81px 1fr; }
    .format { width: 200px; } .format .gbody { padding-left: 9px; grid-template-columns: 87px 9px 9px 76px; }
    .drawing { width: 309px; } .drawing .gbody { padding-left: 3px; grid-template-columns: 69px 3px 77px 48px 3px 1fr; }
    .openings { width: 244px; } .openings .gbody { padding-left: 7px; grid-template-columns: 48px 49px 1fr; }
    .insert { width: 275px; } .insert .gbody { padding-left: 3px; grid-template-columns: 45px 82px 78px 62px; }
    .revisions { width: 79px; } .revisions .gbody { padding-left: 13px; grid-template-columns: 52px; }
    .cubit { width: 217px; border-right: 1px solid #d0d0d0; } .cubit .gbody { padding-left: 1px; grid-template-columns: 48px 48px 48px 64px; }
    .big { display: flex; flex-direction: column; align-items: center; gap: 5px; padding-top: 3px; text-align: center; }
    .big.on { background: #c5c5c5; }
    .big span { display: block; }
    .big .tri { display: inline-block; vertical-align: middle; margin-left: 3px; }
    .big .under { display: block; margin: 4px auto 0; }
    .col { display: flex; flex-direction: column; padding: 1px 0 0 7px; }
    .col.two { padding-top: 4px; }
    .col button { display: flex; align-items: center; gap: 4px; height: 22px; }
    .col.two button { height: 30px; }
    .col .tri { margin: 0 8px 0 auto; }
    .vsep { width: 1px; height: 58px; background: #cfcfcf; margin-top: 5px; }
    .combos { display: grid; grid-template-columns: 1fr auto; grid-auto-rows: 20px; row-gap: 9px; align-content: start; padding-top: 9px; align-items: center; }
    .combo { display: grid; grid-template-columns: 1fr 17px; width: 52px; height: 20px; border: 1px solid #aaa; background: #fff; place-items: center; }
    .combo .sw { grid-area: 1 / 1; }
    .combo .arr { grid-area: 1 / 2; align-self: stretch; justify-self: stretch; display: grid; place-items: center; border-left: 1px solid #aaa; background: #f4f4f4; }
    .combo select { grid-area: 1 / 1 / 2 / 3; width: 100%; height: 100%; appearance: none; border: 0; background: none; color: transparent; }
    .sw.magenta { width: 23px; height: 11px; background: #ff80ff; border: 1px solid #444; }
    .sw.fill { width: 13px; height: 13px; background: linear-gradient(135deg, #fff, #bbb); border: 1px solid #6f8fae; }
    .sw.thin { width: 30px; height: 2px; background: #888; }
    .sw.thick { width: 30px; height: 5px; background: #888; }
    .collapse { margin: auto 10px 4px auto; }

    .formula { display: grid; grid-template-columns: 84px 32px 120px 60px 25px 25px 1fr; height: 20px; align-items: center; flex: none; padding-right: 2px; }
    .formula .c { text-align: center; }
    .formula .des { padding-left: 26px; }
    .formula .fx { font: italic 15px/18px "Liberation Serif", serif; color: #555; text-align: right; padding-right: 6px; }
    .formula button { height: 19px; display: grid; place-items: center; border: 1px solid #999; border-top: 0; align-self: start; }
    .formula input { height: 19px; align-self: start; border: 0; background: #fff; padding: 2px 4px 0; min-width: 0; outline: 0; }

    .main { flex: 1; display: grid; grid-template-columns: 892px minmax(0, 1fr); gap: 5px; min-height: 0; padding: 1px 2px 0; }
    .left { display: flex; flex-direction: column; border: 1px solid #a6a6a6; min-height: 0; padding: 0 1px 1px; }
    .lefthead { display: flex; justify-content: space-between; padding: 9px 10px 0 11px; height: 36px; font-size: 14px; line-height: 16px; flex: none; }
    .lefttabs { display: flex; height: 26px; border-bottom: 1px solid #a6a6a6; padding-left: 3px; flex: none; }
    .lefttabs button { padding: 0 5px 0 4px; }
    .lefttabs button.on { background: #d9d9d9; width: 54px; color: #222; text-align: left; }
    .tools { display: flex; align-items: center; height: 28px; padding-left: 2px; flex: none; }
    .tools button { width: 26px; height: 24px; display: grid; place-items: center; flex: none; }
    .tools button.drop { width: 17px; }
    .tools button.on { background: #c5c5c5; }
    .tools > i { width: 1px; height: 22px; background: #c8c8c8; margin: 0 3px; }
    .abc b { display: block; font: bold 7px/8px "DejaVu Sans", sans-serif; color: #4a80b8; text-align: center; }

    .frame { flex: 1; display: flex; flex-direction: column; border: 1px solid #bdbdbd; min-height: 0; }
    .gridwrap { flex: 1; display: grid; grid-template-columns: 866px 1fr; min-height: 0; overflow: hidden; border-bottom: 1px solid #a6a6a6; padding: 1px 0 0 2px; }
    .gridwrap > div { overflow: hidden; min-height: 0; }
    table { border-collapse: separate; border-spacing: 0; table-layout: fixed; background: #fff; }
    .est { width: 866px; }
    th { font-weight: normal; text-align: left; background: #f0f0f0; height: 20px; padding: 0 0 0 3px; border-right: 1px solid #a6a6a6; border-bottom: 1px solid #a6a6a6; white-space: nowrap; }
    td { padding: 0; border-right: 1px solid #cfcfcf; border-bottom: 1px solid #cfcfcf; white-space: nowrap; }
    tr.h1 { height: 19px; } tr.h2 { height: 31px; } tr.h3 { height: 45px; } tr.h5 { height: 71px; }
    td.num { background: #f0f0f0; border-right-color: #a6a6a6; border-bottom: 0; padding: 2px 4px 0 8px; }
    td.num div { overflow: hidden; width: 16px; }
    td.ind { border: 0; }
    td.ind.last { border-right: 1px solid #cfcfcf; }
    .node { width: 0; height: 0; border-left: 6px solid transparent; border-bottom: 6px solid #555; margin: 3px 0 0 5px; }
    td.desc { padding: 2px 0 1px 4px; vertical-align: top; }
    td.code { padding: 2px 0 0 3px; vertical-align: top; }
    td.mid .ic { margin: 0 auto; }
    td.n { text-align: right; padding-right: 4px; }
    td.unit { padding-left: 3px; }
    td.blue { color: #1010b8; }
    td.incl { color: #d020c8; }
    td.total { border-right-color: #a0a0a0; }
    tr.section td { background: #6aaade; color: #fff; border-right-color: #a9cdec; }
    tr.section td.num { background: #f0f0f0; color: #333; border-right-color: #a6a6a6; }
    tr.section td.ind { background: #fff; border-right-color: #fff; }
    tr.section td.total { border-right-color: #8da4b8; padding-right: 3px; }
    tr.sel td.cell { background: #dfffdf; border-right-color: #b9d6b9; }
    tr.sel td.desc { border: 2px solid #041c04; padding: 0 0 0 2px; color: #3f5a3f; }
    tr.sel td.cell.desc { border-color: #041c04; }
    .scroll { display: flex; flex-direction: column; align-items: center; background: #ebebeb; margin-top: 20px; padding: 5px 0 4px; }
    .scroll .thumb { width: 17px; height: 35px; background: #cdcdcd; margin-top: 5px; }

    .crumbs { display: flex; align-items: center; height: 34px; padding: 0 8px 0 9px; flex: none; }
    .rt { display: block; width: 0; height: 0; border: 4px solid transparent; border-left: 4px solid #666; border-right: 0; }
    .crumbs .rt { margin: 0 11px; }
    .crumbs b, .sheetfoot b { color: #000; margin-left: 13px; }
    .split { height: 14px; display: grid; place-items: center; flex: none; }
    .sheettabs { display: flex; height: 24px; flex: none; }
    .sheettabs button { display: flex; align-items: center; gap: 4px; border-bottom: 1px solid #bdbdbd; padding: 2px 10px 0; }
    .sheettabs button.on { border: 1px solid #bdbdbd; border-bottom: 0; width: 127px; color: #222; }
    .sheettabs .rest { flex: 1; border-bottom: 1px solid #bdbdbd; display: flex; justify-content: flex-end; padding: 2px 3px 0 0; }
    .sheet { border: 1px solid #bdbdbd; border-top: 0; flex: none; display: flex; flex-direction: column; }
    .sheet .tools { padding-left: 2px; height: 29px; }
    .sheetgrid { border-top: 1px solid #a6a6a6; border-bottom: 1px solid #a6a6a6; background: #fff; height: 84px; }
    .sheetgrid table { width: 100%; }
    .sheetgrid th { height: 20px; }
    .sheetgrid td.num { padding: 0 0 0 9px; }
    .sheetgrid td.desc { vertical-align: middle; padding: 0 0 0 4px; }
    .sheetgrid input { appearance: none; width: 13px; height: 13px; border: 1px solid #999; margin: 0 auto; display: block; background: #fff; }
    .sheetfoot { height: 20px; text-align: right; padding: 5px 7px 0 0; color: #222; }

    .right { display: flex; flex-direction: column; border-right: 1px solid #a6a6a6; border-bottom: 1px solid #a6a6a6; min-height: 0; min-width: 0; }
    .vtabs { height: 25px; border-bottom: 3px solid #a6a6a6; padding-top: 2px; flex: none; display: flex; }
    .vtabs button { background: #a6a6a6; color: #fff; width: 65px; }
    .pick { display: flex; gap: 6px; padding: 3px 3px 0 3px; height: 24px; flex: none; }
    .pick .box { flex: 1; display: grid; grid-template-columns: 1fr 16px; border: 1px solid #a6a6a6; background: #fff; }
    .pick select { grid-area: 1 / 1 / 2 / 3; appearance: none; border: 0; background: none; padding: 0 2px; outline: 0; }
    .pick .arr { grid-area: 1 / 2; border-left: 1px solid #a6a6a6; background: #f0f0f0; display: grid; place-items: center; }
    .pick button { width: 75px; border: 1px solid #a6a6a6; display: flex; align-items: center; gap: 12px; padding-left: 3px; }
    .canvas { flex: 1; display: grid; position: relative; border: 1px solid #a6a6a6; border-top-width: 2px; margin: 5px 3px 0 4px; min-height: 0; background: #000; }
    .overlay { position: absolute; top: 8px; left: 0; right: 7px; display: flex; justify-content: center; gap: 11px; }
    .overlay button { display: block; }
    .ptabs { display: flex; height: 26px; align-items: flex-start; padding-left: 4px; flex: none; }
    .ptabs .pt { display: flex; align-items: center; gap: 13px; height: 22px; padding: 1px 9px 0; border: 1px solid transparent; border-top: 0; }
    .ptabs .pt.on { border-color: #bdbdbd; color: #222; background: #f5f5f5; }

    .status { display: flex; align-items: center; height: 21px; margin-top: 3px; border-top: 1px solid #bdbdbd; padding: 0 6px; flex: none; }
    .stat { display: flex; gap: 14px; padding: 1px 7px; border-left: 1px solid #cfcfcf; }
    .stat.first { border: 0; }
    .stat.last { padding-right: 0; }
    .strip { display: grid; grid-template-columns: 48px 343px 1fr; height: 2px; background: #3a3838; flex: none; }
    .strip i { grid-column: 2; background: #b8b8b8; }
  `;

  private big(ic: unknown, lines: string[], o: { dim?: boolean; on?: boolean; drop?: boolean; under?: boolean } = {}) {
    return html`<button class=${classMap({ big: true, dim: !!o.dim, on: !!o.on })}>${ic}
      <span>${lines.map((l, i) => html`${i ? html`<br>` : nothing}${l}`)}${o.drop ? html`<i class="tri"></i>` : nothing}${o.under ? html`<i class="tri under"></i>` : nothing}</span></button>`;
  }

  private col(items: [unknown, string, boolean?, boolean?][], cls = "") {
    return html`<div class="col ${cls}">${items.map(([ic, t, dim, drop]) =>
      html`<button class=${dim ? "dim" : ""}>${ic}<span>${t}</span>${drop ? html`<i class="tri"></i>` : nothing}</button>`)}</div>`;
  }

  private group(cls: string, label: string, body: unknown) {
    return html`<section class="group ${cls}"><div class="gbody">${body}</div><div class="glabel">${label}</div></section>`;
  }

  private combo(id: string, label: string, sw: string, option: string) {
    return html`<label for=${id}>${label}</label><span class="combo"><i class="sw ${sw}"></i><i class="arr"><i class="tri"></i></i><select id=${id}><option>${option}</option></select></span>`;
  }

  private ribbon() {
    return html`<div class="ribbon">
      ${this.group("edit", "Edit", html`
        ${this.big(I.cursor, ["Select"], { on: true })}
        ${this.col([[I.undo, "Undo"], [I.redo, "Redo", true], [I.del, "Delete"]])}
        ${this.big(I.rates, ["Adjust", "Rates"], { drop: true })}`)}
      ${this.group("shapes", "Shapes", html`
        ${this.big(I.polyline, ["Polyline"], { dim: true })}
        ${this.big(I.autoSelect, ["Auto Select"], { dim: true })}
        ${this.col([[I.rect, "Rectangle", true], [I.ellipse, "Ellipse", true], [I.pick, "Pick lines", true]])}
        ${this.col([[I.line, "Line", true], [I.hand, "Count", true], [I.text, "Text", true]])}`)}
      ${this.group("format", "Format", html`
        <div class="combos">${this.combo("colour", "Colour", "magenta", "Magenta")}${this.combo("fill", "Fill", "fill", "Gradient")}</div>
        <span></span><i class="vsep"></i>
        <div class="combos">${this.combo("line", "Line", "thin", "Solid")}${this.combo("size", "Size", "thick", "Thick")}</div>`)}
      ${this.group("drawing", "Drawing", html`
        ${this.col([[I.finish, "Finish", true], [I.closeShape, "Close", true], [I.cancel, "Cancel", true]])}
        <i class="vsep"></i>
        ${this.col([[I.phantom, "Phantom", true], [I.ortho, "Ortho", true, true]], "two")}
        ${this.big(I.ruler, ["Ruler"], { dim: true })}
        <i class="vsep"></i>
        ${this.col([[I.editSel, "Edit On Select", true], [I.addPt, "Add Point", true], [I.remPt, "Remove Point", true]])}`)}
      ${this.group("openings", "Openings", html`
        ${this.big(I.windows, ["Windows"], { dim: true, under: true })}
        ${this.big(I.doors, ["Doors"], { dim: true, under: true })}
        ${this.col([[I.winOpen, "Window Openings", true, true], [I.doorOpen, "Door Openings", true, true], [I.openLib, "Openings library"]])}`)}
      ${this.group("insert", "Insert", html`
        ${this.big(I.prices, ["Price", "Lists"])}
        ${this.col([[I.page, "Templates"], [I.excel, "Excel"]], "two")}
        ${this.big(I.variation, ["Add Variation", "Item"])}
        ${this.big(I.constants, ["Constants"])}`)}
      ${this.group("revisions", "Revisions", this.big(I.revision, ["Begin", "Revision"], { on: true }))}
      ${this.group("cubit", "Cubit Select", html`
        ${this.big(I.send, ["Send"])}${this.big(I.receive, ["Receive"], { dim: true })}
        ${this.big(I.open, ["Open"], { dim: true })}${this.big(I.hide, ["Hide Picked"], { dim: true })}`)}
      <button class="collapse" aria-label="Collapse ribbon">${I.collapse}</button>
    </div>`;
  }

  private row(r: Row) {
    const cls = classMap({ section: !!r.section, sel: !!r.sel, [`h${r.d.length}`]: true });
    const text = r.d.map((l, i) => html`${i ? html`<br>` : nothing}${l}`);
    return html`<tr class=${cls}>
      <td class="num"><div>${r.n}</div></td>
      <td class="ind">${r.section ? html`<div class="node"></div>` : nothing}</td>
      ${r.section ? html`<td class="desc" colspan="2">${text}</td>` : html`<td class="ind last"></td><td class="desc cell">${text}</td>`}
      <td class="code cell">${r.code}</td>
      <td class="mid cell">${r.kind ? KIND[r.kind] : nothing}</td>
      <td class="cell"></td>
      <td class="n cell ${r.qp ? "" : "blue"}">${r.q}</td>
      <td class="unit cell">${r.u}</td>
      <td class="n cell ${r.sel ? "" : "blue"}">${r.r}</td>
      <td class="cell"></td>
      <td class="n cell total ${r.incl ? "incl" : ""}">${r.t}</td>
      <td class="cell"></td>
      <td class="mid cell">${r.section ? eye("#5f86ad", "#4878a8") : r.eye ? (r.sel ? eye("#6f9f8f", "#2f8080") : eye()) : nothing}</td>
    </tr>`;
  }

  private estimate() {
    const widths = [29, 15, 14, 352, 65, 20, 40, 60, 40, 60, 45, 81, 25, 20];
    const b = (ic: unknown, label: string, cls = "") => html`<button class=${cls} aria-label=${label}>${ic}</button>`;
    const drop = html`<button class="drop" aria-label="More"><i class="tri"></i></button>`;
    return html`
      <div class="lefthead"><span>Estimate</span>${I.pinBlack}</div>
      <div class="lefttabs"><button class="on">Estimate</button><button>Grouped Views</button></div>
      <div class="tools">
        ${b(listIcon(3, 3), "All levels")}${b(listIcon(7, 7), "Trade level")}${b(listIcon(8, 4), "Item level")}<i></i>
        ${b(T.wrench, "Add trade item")}${drop}${b(T.prev, "Previous")}${b(T.next, "Next")}<i></i>
        ${b(T.tree, "Add level")}${drop}<i></i>
        ${b(rowAdd("#4a9ccf", "#9a9a9a"), "Insert above")}${b(rowAdd("#4a9ccf", "#9a9a9a", true), "Insert below")}<i></i>
        ${b(I.del, "Delete")}<i></i>${b(T.outdent, "Outdent")}${b(T.indent, "Indent")}<i></i>
        ${b(T.merge, "Group")}${b(T.mergeOn, "Ungroup", "on")}<i></i>${b(T.abc, "Find text")}<i></i>
        ${b(T.flagL, "Previous flag")}${b(T.flagR, "Next flag")}
      </div>
      <div class="frame">
        <div class="gridwrap">
          <div><table class="est">
            <colgroup>${widths.map((w) => html`<col width=${w}>`)}</colgroup>
            <thead><tr><th></th><th colspan="3">Description</th><th>Cost Codes</th><th>...</th><th>Factor</th><th>Quantity</th><th>Unit</th><th>Rate</th><th>Markup</th><th>Total</th><th></th><th></th></tr></thead>
            <tbody>${ROWS.map((r) => this.row(r))}</tbody>
          </table></div>
          <div class="scroll">
            ${icon(8, svg`<path d="M1 6l3.500-4L8 6" fill="none" stroke="#555" stroke-width="2"/>`, 9)}<div class="thumb"></div><span class="grow"></span>
            ${icon(8, svg`<path d="M1 2l3.500 4L8 2" fill="none" stroke="#555" stroke-width="2"/>`, 9)}
          </div>
        </div>
        <div class="crumbs">${icon(14, svg`<path d="M0 2.500h14" stroke="#4a9ccf" stroke-width="2"/><path d="M4 6.500h10M7 10.500h7" stroke="#8a8a8a" stroke-width="2"/>`)}<i class="rt"></i>Piling - Bored Pi...<i class="rt"></i>Basement site ret...<span class="grow"></span>Total:<b>13,141,941.00</b></div>
      </div>
      <div class="split">${icon(8, svg`<path d="M1 2l3 4 3-4" fill="none" stroke="#555" stroke-width="1.600"/>`)}</div>
      ${this.sheet()}`;
  }

  private sheet() {
    const w = [20, 15, 0, 40, 65, 65, 60, 20, 82, 25, 22];
    const calc = icon(16, svg`<path d="M7 2h7v11H6v-4" fill="none" stroke="#6b6b6b" stroke-width="2"/><circle cx="10" cy="7.500" r="2.500" fill="#fff" stroke="#6b6b6b"/><path d="M1.500 9.500h4v4h-4z" fill="none" stroke="#e9b44c" stroke-width="1.500"/>`);
    const brick = icon(14, svg`<path d="M0 2h6v2.500H0zM7 2h7v2.500H7zM0 5.500h3V8H0zM4 5.500h6V8H4zM11 5.500h3V8h-3zM0 9h6v3H0zM7 9h7v3H7z" fill="#dc6f85"/>`);
    return html`
      <div class="sheettabs"><button class="on">${calc}<span>Calculation Sheet</span></button><button>${brick}<span>Rate Sheet</span></button>
        <div class="rest">${icon(14, svg`<path d="M.5 1.500h13v11H.5zM7 2v11" fill="none" stroke="#6b6b6b"/><path d="M0 1h14v2H0z" fill="#6b6b6b"/>`)}</div></div>
      <div class="sheet">
        <div class="tools"><button aria-label="Insert row above">${rowAdd("#b4b4b4", "#c0c0c0")}</button><button aria-label="Insert row below">${rowAdd("#b4b4b4", "#c0c0c0", true)}</button></div>
        <div class="sheetgrid"><table>
          <colgroup>${w.map((x) => (x ? html`<col width=${x}>` : html`<col>`))}</colgroup>
          <thead><tr><th></th><th colspan="2">Description</th><th>Factor</th><th>Length (m)</th><th>Width (m)</th><th>Subtotal</th><th>&nbsp;-</th><th>Total</th><th></th><th></th></tr></thead>
          <tbody>
            <tr class="h1"><td class="num"><i class="rt"></i></td><td class="ind last"></td><td class="desc">Perimeter</td><td class="n">1</td><td></td><td></td><td class="n">1,752.654</td><td><input type="checkbox" aria-label="Negative"></td><td class="n total">1,752.654</td><td></td><td class="mid">${eye()}</td></tr>
            <tr class="h1"><td class="num"></td><td class="ind last"></td><td></td><td></td><td></td><td></td><td></td><td></td><td class="total"></td><td></td><td></td></tr>
          </tbody></table></div>
        <div class="sheetfoot">Total:<b>1,752.65</b></div>
      </div>`;
  }

  private viewport() {
    const tabs = ["Plan 1, page 1", "Warehouse (1)", "DKO - Hotel Plan, page 1", "Conference Center"];
    const pic = icon(16, svg`<path d="M1.500 1.500h9l3 3v10h-12z" fill="#f4f4f4" stroke="#8a8a8a"/><path d="M3 8l4-4 4 4v5H3z" fill="#e9a060"/><path d="M5 13V9h3v4z" fill="#666"/><path d="M12 9v6M9 12h6" stroke="#3f9f7f" stroke-width="1.800"/>`);
    return html`
      <div class="vtabs"><button>Viewport</button></div>
      <div class="pick"><span class="box"><i class="arr"><i class="tri"></i></i><select aria-label="Drawing"><option>Conference Center</option></select></span><button>${pic}<span>Insert</span></button></div>
      <div class="canvas"><model-view></model-view>
        <div class="overlay">${VIEW_TOOLS.map(([l, ic]) => html`<button aria-label=${l}>${ic}</button>`)}</div></div>
      <div class="ptabs">${tabs.map((t, i) => html`<div class=${classMap({ pt: true, on: i === 3 })}><button>${t}</button><button aria-label="Close ${t}">${icon(8, svg`<path d="M1 1l6 6M7 1L1 7" stroke="#666" stroke-width="1.600"/>`)}</button></div>`)}</div>`;
  }

  render() {
    const stats = [["GFA:", "0.00 m2"], ["G.S.T:", "10.00%"], ["Estimate:", "13,141,941.00"], ["Adjustment:", "0.00"], ["Variations:", "0.00"], ["Total:", "13,141,941.00"]];
    const q = (ic: unknown, l: string, c = "") => html`<button class=${c} aria-label=${l}>${ic}</button>`;
    return html`
      <header class="titlebar">
        <div class="lead"><div class="quick">
          ${q(I.appLogo, "Cubit")}${q(I.pages, "Copy")}<i class="bar"></i>${q(I.rocket, "Launch")}${q(I.gridFind, "Find in grid")}${q(I.cascade, "Windows")}${q(I.grid, "Grid", "slim")}
          <button aria-label="Grid options"><i class="tri light"></i></button><button aria-label="Customize"><span class="more"><i class="tri light"></i></span></button>
        </div><div class="orange">Revisions</div></div>
        <div class="apptitle">The Regency Hotel - Cubit Estimating Pro</div>
        <div class="wins">${q(I.pin, "Ribbon options")}${q(I.min, "Minimize")}${q(I.restore, "Restore")}${q(I.close, "Close")}</div>
      </header>
      <nav class="tabs"><button>Job</button><button class="on">Home</button><button>Plans</button><button>View</button><button>Data</button><button>Configuration</button><button class="manage">Manage</button>
        <div class="helps">${q(I.info, "About")}${q(I.help, "Help")}</div></nav>
      ${this.ribbon()}
      <div class="formula"><label class="c" for="expr">Item</label>${I.copyGrey}<span class="des">IT001102.Des</span><span class="fx">fx</span>
        <button aria-label="Cancel">${I.x}</button><button aria-label="Accept">${I.check}</button>
        <input id="expr" value="Basement site retention including bored piers, capping / header beams, rock anchors, temporary propping, testing, drainage and sprayed / insitu concrete..."></div>
      <main class="main"><section class="left">${this.estimate()}</section><section class="right">${this.viewport()}</section></main>
      <footer class="status"><span>1 Trade Item selected</span><span class="grow"></span>
        ${stats.map(([l, s], i) => html`<span class=${classMap({ stat: true, first: i === 0, last: i === 5 })}><span>${l}</span><span>${s}</span></span>`)}</footer>
      <div class="strip"><i></i></div>`;
  }
}
